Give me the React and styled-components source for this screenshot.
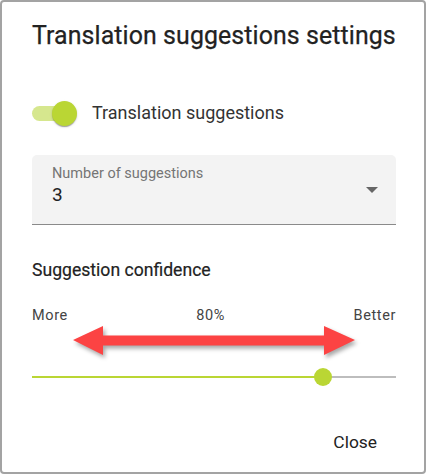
import React from "react";
import styled, { createGlobalStyle } from "styled-components";

const Global = createGlobalStyle`
  html, body { margin: 0; padding: 0; background: #ffffff; }
  body { font-family: Roboto, "Liberation Sans", sans-serif; }
  * { box-sizing: border-box; }
`;

const Dialog = styled.div`
  position: relative;
  width: 426px;
  height: 474px;
  border: 2px solid #a3a3a3;
  border-radius: 4px;
  background: #fff;
  display: flex;
  flex-direction: column;
  padding: 18px 28px 0 30px;
  color: #222;
`;

const Title = styled.h2`
  margin: 0;
  font-size: 24.9px;
  line-height: 32px;
  font-weight: 400;
  color: #222;
  letter-spacing: 0.1px;
  white-space: nowrap;
  -webkit-text-stroke: 0.25px #222;
`;

const SwitchRow = styled.label`
  display: flex;
  align-items: center;
  gap: 19px;
  margin-top: 48px;
  height: 26px;
`;

const SwitchTrack = styled.span`
  position: relative;
  width: 41px;
  height: 15px;
  border-radius: 8px;
  background: ${(p) => (p.$on ? "#d6e78e" : "#c4c4c4")};
  flex: none;
`;

const SwitchThumb = styled.span`
  position: absolute;
  top: 50%;
  left: ${(p) => (p.$on ? "20px" : "-4px")};
  width: 25px;
  height: 25px;
  margin-top: -12.5px;
  border-radius: 50%;
  background: #bad634;
  box-shadow: 0 2px 1px -1px rgba(0,0,0,0.2), 0 1px 1px 0 rgba(0,0,0,0.14), 0 1px 3px 0 rgba(0,0,0,0.12);
`;

const SwitchLabel = styled.span`
  font-size: 18px;
  line-height: 24px;
  color: #333;
`;

const SelectBox = styled.div`
  position: relative;
  margin-top: 29px;
  height: 70px;
  background: #f3f3f3;
  border-radius: 5px 5px 0 0;
  border-bottom: 1.5px solid #8a8a8a;
  padding: 9px 20px 0 20px;
  display: flex;
  flex-direction: column;
`;

const SelectLabel = styled.span`
  font-size: 14.5px;
  line-height: 20px;
  color: #757575;
`;

const SelectValue = styled.span`
  font-size: 19px;
  line-height: 24px;
  color: #222;
  margin-top: -1px;
`;

const Caret = styled.span`
  position: absolute;
  right: 18px;
  top: 32px;
  width: 0;
  height: 0;
  border-left: 6.5px solid transparent;
  border-right: 6.5px solid transparent;
  border-top: 6px solid #666;
`;

const SectionTitle = styled.div`
  margin-top: 34px;
  font-size: 17.6px;
  line-height: 22px;
  font-weight: 400;
  color: #222;
  -webkit-text-stroke: 0.2px #222;
`;

const ScaleRow = styled.div`
  display: flex;
  justify-content: space-between;
  margin-top: 25px;
  font-size: 14.5px;
  line-height: 20px;
  color: #444;
  letter-spacing: 0.6px;
`;

const Slider = styled.div`
  position: relative;
  margin-top: 50px;
  height: 2px;
  background: #bdbdbd;
`;

const SliderFill = styled.div`
  position: absolute;
  left: 0;
  top: 0;
  height: 2px;
  background: #bad634;
`;

const SliderThumb = styled.div`
  position: absolute;
  top: 50%;
  width: 18px;
  height: 18px;
  margin-left: -9px;
  margin-top: -9px;
  border-radius: 50%;
  background: #bad634;
`;

const Actions = styled.div`
  display: flex;
  justify-content: flex-end;
  margin-top: 53px;
`;

const TextButton = styled.button`
  border: none;
  background: transparent;
  font-family: Roboto, "Liberation Sans", sans-serif;
  font-size: 17.4px;
  line-height: 22px;
  color: #222;
  padding: 0 19px 0 0;
  cursor: pointer;
`;

const Annotation = styled.svg`
  position: absolute;
  left: 68px;
  top: 319px;
  overflow: visible;
  filter: drop-shadow(2px 3px 2px rgba(0,0,0,0.35));
`;

function DoubleArrow() {
  return (
    <Annotation width="292" height="42" viewBox="0 0 292 42">
      <polygon
        fill="#fc4343"
        points="3,19 33,5 33,14.5 254,14.5 254,5 285,19 254,34 254,24.5 33,24.5 33,34"
      />
    </Annotation>
  );
}

export default function App() {
  const value = 80;
  return (
    <>
      <Global />
      <Dialog>
        <Title>Translation suggestions settings</Title>
        <SwitchRow>
          <SwitchTrack $on>
            <SwitchThumb $on />
          </SwitchTrack>
          <SwitchLabel>Translation suggestions</SwitchLabel>
        </SwitchRow>
        <SelectBox>
          <SelectLabel>Number of suggestions</SelectLabel>
          <SelectValue>3</SelectValue>
          <Caret />
        </SelectBox>
        <SectionTitle>Suggestion confidence</SectionTitle>
        <ScaleRow>
          <span>More</span>
          <span>{value}%</span>
          <span>Better</span>
        </ScaleRow>
        <Slider>
          <SliderFill style={{ width: `${value}%` }} />
          <SliderThumb style={{ left: `${value}%` }} />
        </Slider>
        <Actions>
          <TextButton>Close</TextButton>
        </Actions>
        <DoubleArrow />
      </Dialog>
    </>
  );
}
